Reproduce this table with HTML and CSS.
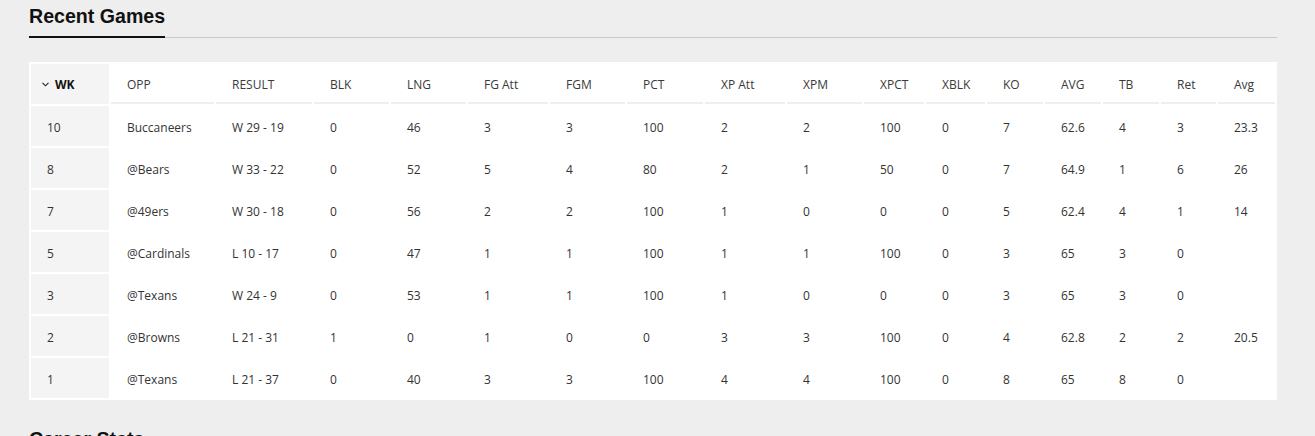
FILE: index.html
```html
<!DOCTYPE html>
<html lang="en">
<head>
<meta charset="utf-8">
<title>Recent Games</title>
<link rel="stylesheet" href="styles.css">
</head>
<body>
<main class="page">
  <section class="section">
    <div class="section-head"><h2 class="section-title">Recent Games</h2></div>
    <table class="stats">
      <colgroup>
        <col class="c78"><col class="c103"><col class="c96"><col class="c75"><col class="c75"><col class="c80"><col class="c75"><col class="c76"><col class="c80"><col class="c75"><col class="c60"><col class="c59"><col class="c56"><col class="c56"><col class="c56"><col class="c55"><col class="c57">
      </colgroup>
      <thead>
        <tr>
          <th class="wk wk-head"><svg class="chev" width="7" height="5" viewBox="0 0 7 5"><polyline points="0.5,0.8 3.5,3.8 6.5,0.8" fill="none" stroke="#222" stroke-width="1.1"/></svg>WK</th>
          <th>OPP</th><th>RESULT</th><th>BLK</th><th>LNG</th><th>FG Att</th><th>FGM</th><th>PCT</th><th>XP Att</th><th>XPM</th><th>XPCT</th><th>XBLK</th><th>KO</th><th>AVG</th><th>TB</th><th>Ret</th><th>Avg</th>
        </tr>
      </thead>
      <tbody>
        <tr><td class="wk">10</td><td>Buccaneers</td><td>W 29 - 19</td><td>0</td><td>46</td><td>3</td><td>3</td><td>100</td><td>2</td><td>2</td><td>100</td><td>0</td><td>7</td><td>62.6</td><td>4</td><td>3</td><td>23.3</td></tr>
        <tr><td class="wk">8</td><td>@Bears</td><td>W 33 - 22</td><td>0</td><td>52</td><td>5</td><td>4</td><td>80</td><td>2</td><td>1</td><td>50</td><td>0</td><td>7</td><td>64.9</td><td>1</td><td>6</td><td>26</td></tr>
        <tr><td class="wk">7</td><td>@49ers</td><td>W 30 - 18</td><td>0</td><td>56</td><td>2</td><td>2</td><td>100</td><td>1</td><td>0</td><td>0</td><td>0</td><td>5</td><td>62.4</td><td>4</td><td>1</td><td>14</td></tr>
        <tr><td class="wk">5</td><td>@Cardinals</td><td>L 10 - 17</td><td>0</td><td>47</td><td>1</td><td>1</td><td>100</td><td>1</td><td>1</td><td>100</td><td>0</td><td>3</td><td>65</td><td>3</td><td>0</td><td></td></tr>
        <tr><td class="wk">3</td><td>@Texans</td><td>W 24 - 9</td><td>0</td><td>53</td><td>1</td><td>1</td><td>100</td><td>1</td><td>0</td><td>0</td><td>0</td><td>3</td><td>65</td><td>3</td><td>0</td><td></td></tr>
        <tr><td class="wk">2</td><td>@Browns</td><td>L 21 - 31</td><td>1</td><td>0</td><td>1</td><td>0</td><td>0</td><td>3</td><td>3</td><td>100</td><td>0</td><td>4</td><td>62.8</td><td>2</td><td>2</td><td>20.5</td></tr>
        <tr><td class="wk">1</td><td>@Texans</td><td>L 21 - 37</td><td>0</td><td>40</td><td>3</td><td>3</td><td>100</td><td>4</td><td>4</td><td>100</td><td>0</td><td>8</td><td>65</td><td>8</td><td>0</td><td></td></tr>
      </tbody>
    </table>
  </section>
  <section class="section next">
    <div class="section-head"><h2 class="section-title">Career Stats</h2></div>
  </section>
</main>
</body>
</html>
```

FILE: styles.css
```css
html, body {
  margin: 0;
  padding: 0;
}
body {
  background: #eeeeee;
  font-family: "Open Sans", "Liberation Sans", sans-serif;
  color: #333;
}
.page {
  padding-left: 29px;
  width: 1248px;
}
.section-head {
  border-bottom: 1px solid #c9c9c9;
}
.section-title {
  display: inline-block;
  margin: 4px 0 -1px;
  padding-bottom: 8px;
  border-bottom: 2px solid #111;
  font-family: "Liberation Sans", Arial, sans-serif;
  font-weight: bold;
  font-size: 19.6px;
  line-height: 24px;
  color: #111;
}
.stats {
  margin-top: 24px;
  width: 1248px;
  table-layout: fixed;
  border-collapse: separate;
  border-spacing: 2px;
  background: #fff;
  font-size: 12px;
}
.c78 { width: 78px; }
.c103 { width: 103px; }
.c96 { width: 96px; }
.c75 { width: 75px; }
.c76 { width: 76px; }
.c80 { width: 80px; }
.c60 { width: 60px; }
.c59 { width: 59px; }
.c56 { width: 56px; }
.c55 { width: 55px; }
.c57 { width: 57px; }
.stats th, .stats td {
  box-sizing: border-box;
  height: 40px;
  padding: 2px 0 0 16px;
  text-align: left;
  vertical-align: middle;
  white-space: nowrap;
  overflow: hidden;
}
.stats th {
  font-weight: normal;
  color: #3a3a3a;
  border-bottom: 2px solid #eeeeee;
  padding-top: 3px;
}
.stats td {
  color: #333;
}
.stats .wk {
  background: #f4f4f4;
}
.stats th.wk-head {
  border-bottom-color: #f4f4f4;
  padding-left: 11px;
  font-weight: bold;
  color: #111;
}
.chev {
  margin-right: 6px;
  vertical-align: 2px;
}
.next {
  margin-top: 23px;
}
```
